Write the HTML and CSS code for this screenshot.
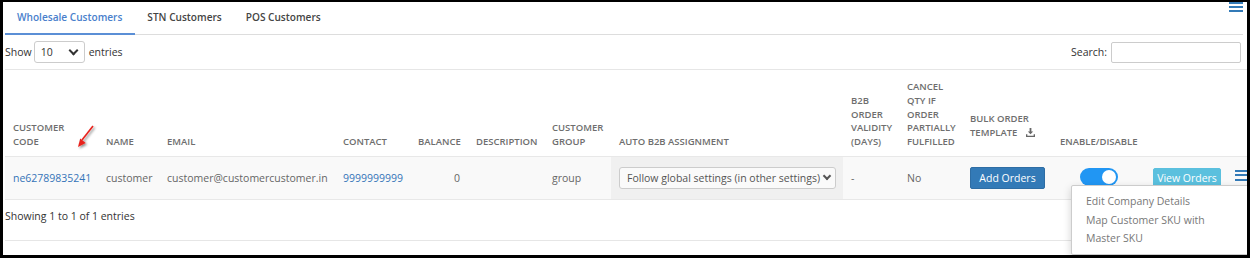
FILE: index.html
```html
<!DOCTYPE html>
<html lang="en">
<head>
  <meta charset="UTF-8">
  <title>Customers</title>
  <link rel="stylesheet" href="styles.css">
</head>
<body>
  <div class="frame">
    <div class="tabs">
      <a class="tab active">Wholesale Customers</a>
      <a class="tab">STN Customers</a>
      <a class="tab">POS Customers</a>
      <span class="menu-icon top"><i></i><i></i><i></i></span>
    </div>

    <div class="toolbar">
      <label class="length">Show
        <span class="select small">10 <b class="chev"></b></span>
        entries</label>
      <label class="search">Search: <span class="input"></span></label>
    </div>

    <div class="table-wrap">
      <table class="grid">
        <colgroup>
          <col style="width:93px"><col style="width:61px"><col style="width:176px">
          <col style="width:75px"><col style="width:58px"><col style="width:76px">
          <col style="width:67px"><col style="width:232px"><col style="width:56px">
          <col style="width:63px"><col style="width:90px"><col style="width:93px">
          <col style="width:82px"><col style="width:35px">
        </colgroup>
        <thead>
          <tr>
            <th>Customer<br>Code</th>
            <th>Name</th>
            <th>Email</th>
            <th>Contact</th>
            <th class="num">Balance</th>
            <th>Description</th>
            <th>Customer<br>Group</th>
            <th>Auto B2B Assignment</th>
            <th>B2B<br>Order<br>Validity<br>(Days)</th>
            <th>Cancel<br>Qty if<br>Order<br>Partially<br>Fulfilled</th>
            <th><div class="bulk">Bulk Order<br>Template
              <svg class="dl" viewBox="0 0 10 10" width="9" height="9"><path d="M4 0h2v4h2L5 7 2 4h2z M0 7h1.5v1.5h7V7H10v3H0z" fill="#666"/></svg></div></th>
            <th class="center">Enable/Disable</th>
            <th></th>
            <th></th>
          </tr>
        </thead>
        <tbody>
          <tr>
            <td><a class="link">ne62789835241</a></td>
            <td>customer</td>
            <td>customer@customercustomer.in</td>
            <td><a class="link">9999999999</a></td>
            <td class="num">0</td>
            <td></td>
            <td>group</td>
            <td class="shade"><span class="select wide">Follow global settings (in other settings) <b class="chev"></b></span></td>
            <td>-</td>
            <td>No</td>
            <td><button class="btn btn-primary">Add Orders</button></td>
            <td class="center"><span class="switch"><i></i></span></td>
            <td><button class="btn btn-info">View Orders</button></td>
            <td><span class="menu-icon"><i></i><i></i><i></i></span></td>
          </tr>
        </tbody>
      </table>
    </div>

    <div class="info">Showing 1 to 1 of 1 entries</div>

    <ul class="dropdown">
      <li>Edit Company Details</li>
      <li>Map Customer SKU with<br>Master SKU</li>
    </ul>

    <svg class="arrow" width="30" height="32" viewBox="0 0 30 32">
      <defs>
        <filter id="sh" x="-50%" y="-50%" width="200%" height="200%">
          <feDropShadow dx="1.5" dy="1.5" stdDeviation="1.2" flood-color="#000" flood-opacity="0.45"/>
        </filter>
      </defs>
      <g filter="url(#sh)">
        <line x1="25" y1="3" x2="14" y2="17" stroke="#e8231d" stroke-width="1.6"/>
        <path d="M10 24l2.2-8.6 5.5 4.6z" fill="#e8231d"/>
      </g>
    </svg>
  </div>
</body>
</html>
```

FILE: styles.css
```css
body {
  margin: 0;
  font-family: 'Open Sans', sans-serif;
  font-size: 10.5px;
  color: #555;
  background: #fff;
}

.frame {
  position: relative;
  width: 1250px;
  height: 258px;
  box-sizing: border-box;
  border-style: solid;
  border-color: #000;
  border-width: 2px 3px 3px 3px;
  overflow: hidden;
  padding-left: 2px;
}

/* tabs */
.tabs {
  display: flex;
  height: 32px;
  margin-right: 4px;
  border-bottom: 1px solid #ddd;
}

.tab {
  display: flex;
  align-items: center;
  padding: 0 12px 1px 12px;
  font-size: 10.1px;
  font-weight: 600;
  color: #444;
  border-bottom: 2px solid transparent;
  margin-bottom: -1px;
}

.tab:first-child {
  padding-right: 13px;
}

.tab.active {
  color: #4a7fcc;
  border-bottom-color: #5b8fd6;
}

.menu-icon {
  display: flex;
  flex-direction: column;
  gap: 2px;
  width: 14px;
}

.menu-icon i {
  display: block;
  height: 2px;
  background: #337ab7;
}

.menu-icon.top {
  margin-left: auto;
  align-self: flex-start;
}

/* toolbar */
.toolbar {
  display: flex;
  justify-content: space-between;
  align-items: center;
  height: 34px;
  border-bottom: 1px solid #e6e6e6;
  color: #333;
}

.toolbar label {
  display: flex;
  align-items: center;
  gap: 4px;
}

.length .select {
  margin-left: -2px;
}

.select {
  display: inline-flex;
  align-items: center;
  justify-content: space-between;
  box-sizing: border-box;
  border: 1px solid #ccc;
  border-radius: 3px;
  background: #fff;
  color: #555;
}

.select.small {
  width: 51px;
  height: 22px;
  padding: 0 5px 0 6px;
  color: #333;
}

.select.wide {
  width: 217px;
  height: 22px;
  padding: 0 3px 0 7px;
  background: #fafafa;
  font-size: 10.5px;
}

.chev {
  width: 5px;
  height: 5px;
  border-right: 2px solid #333;
  border-bottom: 2px solid #333;
  transform: rotate(45deg);
  margin-top: -4px;
  margin-right: 2px;
}

.select.wide .chev {
  border-color: #555;
  width: 4px;
  height: 4px;
}

.search {
  margin-right: 6px;
}

.input {
  display: block;
  width: 130px;
  height: 21px;
  box-sizing: border-box;
  border: 1px solid #ccc;
  border-radius: 2px;
}

/* table */
.table-wrap {
  overflow: hidden;
}

.grid {
  border-collapse: collapse;
  table-layout: fixed;
  width: 1257px;
}

.grid th {
  text-align: left;
  vertical-align: bottom;
  padding: 8px 8px 7px 8px;
  height: 71px;
  font-size: 9.5px;
  font-weight: 600;
  line-height: 13.8px;
  text-transform: uppercase;
  color: #6e6e6e;
  border-bottom: 1px solid #e8e8e8;
  white-space: nowrap;
}

.grid td {
  padding: 0 8px;
  height: 42px;
  background: #f9f9f9;
  border-bottom: 1px solid #e8e8e8;
  white-space: nowrap;
  color: #666;
}

.grid td.shade {
  background: #f0f0f0;
}

.grid .num {
  text-align: right;
}

.grid .center {
  text-align: center;
}

.bulk {
  margin-bottom: 9px;
}

.dl {
  margin-left: 6px;
  vertical-align: -1px;
}

.link {
  color: #3574b8;
}

.btn {
  font-family: inherit;
  font-size: 10.5px;
  color: #fff;
  border-radius: 2px;
  cursor: pointer;
  padding: 0;
}

.btn-primary {
  width: 75px;
  height: 22px;
  background: #337ab7;
  border: 1px solid #2e6da4;
}

.btn-info {
  width: 68px;
  height: 20px;
  background: #5bc0de;
  border: 1px solid #5bc0de;
}

.switch {
  display: inline-block;
  position: relative;
  width: 38px;
  height: 18px;
  border-radius: 9px;
  background: #2196f3;
  vertical-align: middle;
  margin-top: -4px;
}

.switch i {
  position: absolute;
  right: 2px;
  top: 2px;
  width: 14px;
  height: 14px;
  border-radius: 50%;
  background: #fff;
}

.grid td .menu-icon {
  width: 16px;
  gap: 2.5px;
  margin-top: -6px;
}

/* footer */
.info {
  height: 31px;
  padding-top: 9px;
  border-bottom: 1px solid #e6e6e6;
  margin-right: -4px;
  color: #333;
}

/* row menu */
.dropdown {
  position: absolute;
  left: 1068px;
  top: 183px;
  width: 172px;
  margin: 0;
  padding: 6px 0 6px 14px;
  list-style: none;
  background: #fff;
  border: 1px solid #ccc;
  border-radius: 2px;
  box-shadow: 0 3px 8px rgba(0, 0, 0, 0.18);
  color: #777;
  font-size: 10.5px;
  line-height: 18.5px;
}

.arrow {
  position: absolute;
  left: 65px;
  top: 121px;
}
```
